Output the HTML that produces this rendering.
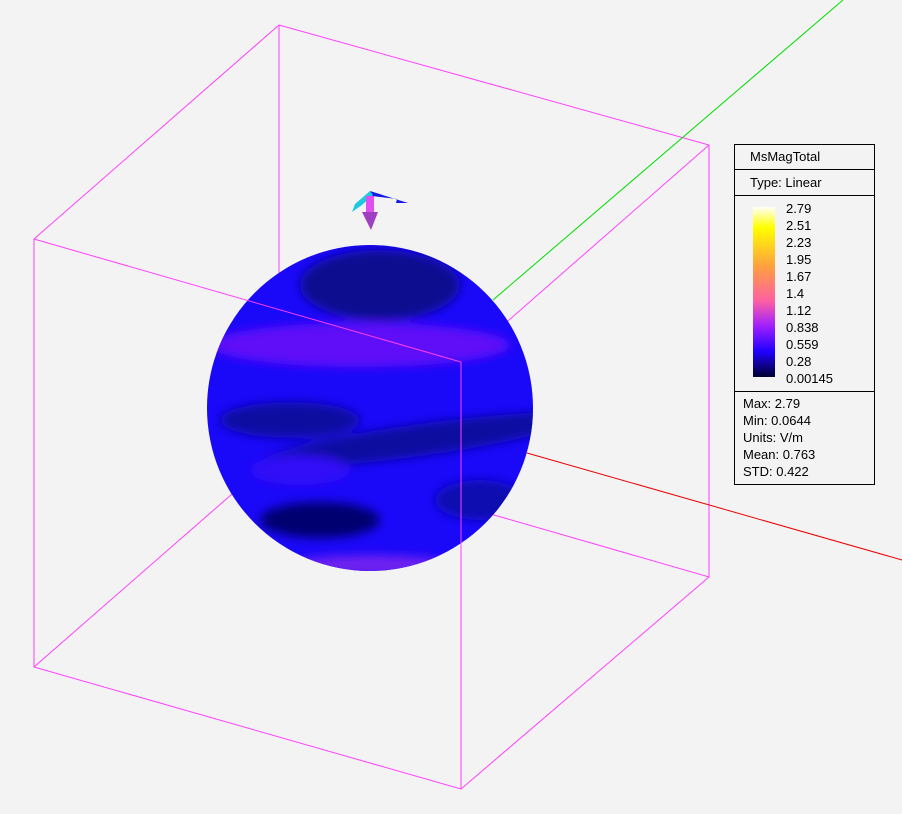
<!DOCTYPE html>
<html><head><style>
html,body{margin:0;padding:0;background:#f3f3f3;}
body{width:902px;height:814px;position:relative;overflow:hidden;font-family:"Liberation Sans",sans-serif;}
#leg{position:absolute;left:734px;top:144px;width:139px;height:339px;border:1px solid #000;background:#f3f3f3;font-size:13px;color:#000;}
.r{border-bottom:1px solid #000;box-sizing:border-box;padding-left:15px;}
#bar{position:absolute;left:18px;top:62px;width:22px;height:170px;background:linear-gradient(to bottom,#fffff8 0%,#ffff00 12%,#ffa040 35%,#ff60a0 55%,#a020ff 70%,#2000ff 85%,#000030 100%);}
#lab{position:absolute;left:51px;top:55px;line-height:17px;}
#st{position:absolute;left:8px;top:250px;line-height:17px;}
</style></head><body>
<svg width="902" height="814" style="position:absolute;left:0;top:0">
<defs>
<clipPath id="c"><circle cx="370" cy="408" r="163"/></clipPath>
<filter id="b"><feGaussianBlur stdDeviation="5"/></filter>
</defs>
<g stroke="#ff40ff" stroke-width="1" fill="none">
<polyline points="279,25 709,145 709,577 279,453 279,25"/>
<line x1="34" y1="239" x2="279" y2="25"/>
<line x1="461" y1="362" x2="709" y2="145"/>
<line x1="461" y1="789" x2="709" y2="577"/>
<line x1="34" y1="667" x2="279" y2="453"/>
</g>
<line x1="493" y1="300" x2="843" y2="0" stroke="#00dd00"/>
<line x1="527" y1="453" x2="902" y2="560" stroke="#ee0000"/>
<circle cx="370" cy="408" r="163" fill="#1a08f8"/>
<g clip-path="url(#c)" filter="url(#b)">
<ellipse cx="380" cy="285" rx="80" ry="35" fill="#0a0890"/>
<ellipse cx="360" cy="345" rx="150" ry="22" fill="#6010f8"/>
<ellipse cx="420" cy="440" rx="160" ry="16" fill="#0808a0" transform="rotate(-8 420 440)"/>
<ellipse cx="290" cy="420" rx="70" ry="18" fill="#0808a0"/>
<ellipse cx="320" cy="520" rx="60" ry="18" fill="#040470"/>
<ellipse cx="370" cy="565" rx="80" ry="10" fill="#7020f0"/>
<ellipse cx="300" cy="470" rx="50" ry="15" fill="#3010f8"/>
<ellipse cx="480" cy="500" rx="45" ry="20" fill="#0a0ab0"/>
</g>
<g stroke="#ff40ff" stroke-width="1" fill="none">
<polyline points="34,239 461,362 461,789 34,667 34,239"/>
</g>
<polygon points="370,191 408,203 396,203 397,199 372,196" fill="#1818e8"/>
<polygon points="370,191 373,195 362,205 352,212 355,204" fill="#20c8e0"/>
<rect x="366" y="196" width="8" height="17" fill="#e050f0"/>
<polygon points="362,212 378,212 371,230" fill="#a040c0"/>
</svg>
<div id="leg">
<div class="r" style="height:25px;line-height:24px;">MsMagTotal</div>
<div class="r" style="height:26px;line-height:25px;">Type: Linear</div>
<div class="r" style="height:196px;position:relative;"></div>
<div id="bar"></div>
<div id="lab">2.79<br>2.51<br>2.23<br>1.95<br>1.67<br>1.4<br>1.12<br>0.838<br>0.559<br>0.28<br>0.00145</div>
<div id="st">Max: 2.79<br>Min: 0.0644<br>Units: V/m<br>Mean: 0.763<br>STD: 0.422</div>
</div>
</body></html>
